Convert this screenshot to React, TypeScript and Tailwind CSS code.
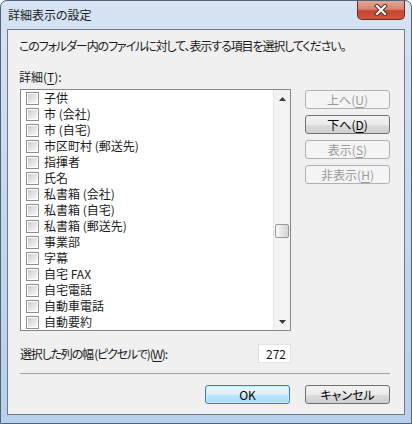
import React from 'react';

const items = [
  '子供',
  '市 (会社)',
  '市 (自宅)',
  '市区町村 (郵送先)',
  '指揮者',
  '氏名',
  '私書箱 (会社)',
  '私書箱 (自宅)',
  '私書箱 (郵送先)',
  '事業部',
  '字幕',
  '自宅 FAX',
  '自宅電話',
  '自動車電話',
  '自動要約',
];

const font = "font-['Noto_Sans_CJK_JP','Noto_Sans',sans-serif] [font-feature-settings:'palt']";

interface BtnProps {
  pre: string;
  mn?: string;
  post?: string;
  disabled?: boolean;
  primary?: boolean;
}

const Btn: React.FC<BtnProps> = ({ pre, mn, post, disabled, primary }) => {
  let cls = 'border-[#707070] bg-[linear-gradient(#f2f2f2_0%,#ebebeb_50%,#dddddd_51%,#cfcfcf_100%)] text-black';
  if (disabled) cls = 'border-[#adb2b5] bg-[#f4f4f4] text-[#9a9a9a]';
  if (primary)
    cls = 'border-[#3c7fb1] bg-[linear-gradient(#eaf6fd_0%,#d9f0fc_50%,#bee6fd_51%,#a7d9f5_100%)] text-black shadow-[inset_0_0_0_1px_#c8ecfd]';
  return (
    <div className={`h-[19px] w-[85px] rounded-[3px] border flex items-center justify-center text-[12px] leading-none ${cls}`}>
      <span>
        {pre}
        {mn && <span className="underline underline-offset-2">{mn}</span>}
        {post}
      </span>
    </div>
  );
};

const CheckBox = () => (
  <div className="w-[13px] h-[13px] border border-[#8e8f8f] bg-white p-[1px] shrink-0">
    <div className="w-full h-full bg-gradient-to-br from-[#cfcfcf] to-[#f8f8f8]" />
  </div>
);

export default function App() {
  return (
    <div className={`w-[412px] h-[424px] flex flex-col rounded-t-[7px] border border-[#4f6278] bg-gradient-to-b from-[#d6e3f2] via-[#c4d8ee] to-[#b9d0ea] pb-[8px] ${font} text-[#1b1b1b]`}>
      {/* Title bar */}
      <div className="h-[28px] flex items-start justify-between">
        <div className="pl-[7px] mt-[6px] text-[12px] leading-[16px] text-[#1a1a1a]">詳細表示の設定</div>
        <div className="mr-[6px] w-[48px] h-[19px] rounded-b-[5px] border border-t-0 border-[#6a2a1e] bg-[linear-gradient(#e6a393_0%,#d88472_45%,#c7452e_55%,#d0543b_100%)] flex items-center justify-center">
          <svg width="14" height="12" viewBox="0 0 14 12">
            <path d="M3 2 L11 10 M11 2 L3 10" stroke="#4a2a24" strokeWidth="4" strokeLinecap="square" />
            <path d="M3 2 L11 10 M11 2 L3 10" stroke="#ffffff" strokeWidth="2.2" strokeLinecap="square" />
          </svg>
        </div>
      </div>

      {/* Content */}
      <div className="mx-[6px] flex-1 border border-[#6b7b90] bg-[#f0f0f0] flex flex-col pl-[11px] pr-[14px] text-[12px] leading-[16px]">
        <div className="mt-[8px] tracking-[-1.1px] whitespace-nowrap">
          このフォルダー内のファイルに対して、表示する項目を選択してください。
        </div>
        <div className="mt-[15px]">
          詳細(<span className="underline underline-offset-2">T</span>):
        </div>

        <div className="mt-[4px] flex pl-[1px]">
          {/* List */}
          <div className="w-[271px] h-[242px] border border-[#828790] bg-white flex">
            <div className="flex-1 flex flex-col">
              {items.map((it) => (
                <div key={it} className="h-[16px] flex items-center pl-[5px] gap-[5px] text-[12px] leading-[16px]">
                  <CheckBox />
                  <span className="whitespace-nowrap">{it}</span>
                </div>
              ))}
            </div>
            <div className="w-[17px] flex flex-col bg-[#f3f3f3] border-l border-[#e6e6e6]">
              <div className="h-[17px] flex items-center justify-center">
                <svg width="7" height="4" viewBox="0 0 7 4">
                  <path d="M0 4 L3.5 0 L7 4 Z" fill="#3a3a3a" />
                </svg>
              </div>
              <div className="flex-1 flex flex-col">
                <div className="mt-[117px] mx-[1px] h-[14px] rounded-[2px] border border-[#979797] bg-gradient-to-r from-[#fafafa] to-[#d3d3d3]" />
              </div>
              <div className="h-[17px] flex items-center justify-center">
                <svg width="7" height="4" viewBox="0 0 7 4">
                  <path d="M0 0 L7 0 L3.5 4 Z" fill="#3a3a3a" />
                </svg>
              </div>
            </div>
          </div>

          {/* Side buttons */}
          <div className="ml-[14px] flex flex-col gap-[6px] mt-[1px]">
            <Btn pre="上へ(" mn="U" post=")" disabled />
            <Btn pre="下へ(" mn="D" post=")" />
            <Btn pre="表示(" mn="S" post=")" disabled />
            <Btn pre="非表示(" mn="H" post=")" disabled />
          </div>
        </div>

        {/* Width row */}
        <div className="mt-[13px] flex items-center pl-[1px]">
          <div className="w-[238px] tracking-[-1.2px] whitespace-nowrap">
            選択した列の幅 (ピクセルで)(<span className="underline underline-offset-2">W</span>):
          </div>
          <div className="w-[33px] h-[19px] border border-[#e2e3ea] bg-white flex items-center justify-end pr-[4px]">
            272
          </div>
        </div>

        <div className="mt-[10px] ml-[1px] border-t border-[#a0a0a0]" />

        <div className="mt-[11px] flex justify-end gap-[15px]">
          <Btn pre="OK" primary />
          <Btn pre="キャンセル" />
        </div>
      </div>
    </div>
  );
}
